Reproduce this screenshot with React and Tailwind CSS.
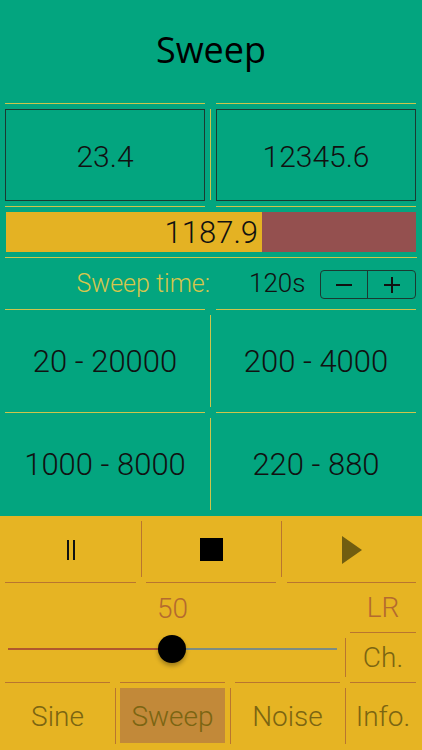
import React from "react";

const G = "bg-[#03a57f]";

function GreenCell({ children, h }) {
  return (
    <div className="w-[200px] flex flex-col">
      <div className="h-px bg-[#cdc54c]" />
      <div className={`${h} flex items-center justify-center text-[31px] text-[#111] pt-[2px]`}>{children}</div>
    </div>
  );
}

function VLine({ w, pt, h, color }) {
  return (
    <div className={`${w} flex justify-center ${pt}`}>
      <div className={`w-px ${h} ${color}`} />
    </div>
  );
}

export default function App() {
  return (
    <div
      className="w-[422px] h-[750px] flex flex-col overflow-hidden font-light"
      style={{ fontFamily: 'Roboto, "Liberation Sans", Arial, sans-serif' }}
    >
      {/* Green top */}
      <div className={`${G} flex flex-col h-[516px]`}>
        <div
          className="h-[103px] flex items-center justify-center text-[36px] text-black pb-[4px] font-normal"
          style={{ fontFamily: '"Open Sans", "Noto Sans", sans-serif' }}
        >
          Sweep
        </div>

        {/* Min / Max boxes */}
        <div className="flex pl-[5px]">
          <div className="w-[200px] flex flex-col">
            <div className="h-px bg-[#cdc54c]" />
            <div className="mt-[5px] h-[92px] border border-[#1b3a31] flex items-center justify-center text-[30px] text-[#111] pt-[3px]">
              23.4
            </div>
            <div className="mt-[5px] h-px bg-[#cdc54c]" />
          </div>
          <VLine w="w-[11px]" pt="pt-[6px]" h="h-[91px]" color="bg-[#cdc54c]" />
          <div className="w-[200px] flex flex-col">
            <div className="h-px bg-[#cdc54c]" />
            <div className="mt-[5px] h-[92px] border border-[#1b3a31] flex items-center justify-center text-[30px] text-[#111] pt-[3px]">
              12345.6
            </div>
            <div className="mt-[5px] h-px bg-[#cdc54c]" />
          </div>
        </div>

        {/* Progress bar */}
        <div className="mt-[5px] mx-[6px] h-[40px] flex bg-[#94504f]">
          <div className="w-[256px] h-full bg-[#e4b223] flex items-center justify-end pr-[4px] text-[31px] text-[#111] pt-[2px]">
            1187.9
          </div>
        </div>
        <div className="mt-[5px] mx-[5px] h-px bg-[#cdc54c]" />

        {/* Sweep time */}
        <div className="h-[51px] flex items-center">
          <div className="w-[210px] text-right text-[25px] text-[#d7c64c]">Sweep time:</div>
          <div className="ml-[39px] w-[61px] text-[26px] text-[#111]">120s</div>
          <div className="ml-[10px] w-[96px] h-[29px] border-[1.5px] border-[#1b3a31] rounded-[4px] flex mt-[2px]">
            <div className="w-[47px] flex items-center justify-center border-r-[1.5px] border-[#1b3a31]">
              <div className="w-[16px] h-[2px] bg-[#111]" />
            </div>
            <div className="flex-1 flex items-center justify-center relative">
              <div className="w-[16px] h-[2px] bg-[#111]" />
              <div className="absolute w-[2px] h-[16px] bg-[#111]" />
            </div>
          </div>
        </div>

        {/* Presets */}
        <div className="flex pl-[5px]">
          <GreenCell h="h-[102px]">20 - 20000</GreenCell>
          <VLine w="w-[11px]" pt="pt-[6px]" h="h-[92px]" color="bg-[#cdc54c]" />
          <GreenCell h="h-[102px]">200 - 4000</GreenCell>
        </div>
        <div className="flex pl-[5px]">
          <GreenCell h="h-[103px]">1000 - 8000</GreenCell>
          <VLine w="w-[11px]" pt="pt-[6px]" h="h-[92px]" color="bg-[#cdc54c]" />
          <GreenCell h="h-[103px]">220 - 880</GreenCell>
        </div>
      </div>

      {/* Yellow bottom */}
      <div className="bg-[#e6b423] flex-1 flex flex-col">
        {/* Transport */}
        <div className="flex pl-[5px]">
          <div className="w-[131px] flex flex-col">
            <div className="h-[66px] flex items-center justify-center">
              <div className="flex gap-[4px] mt-[2px]">
                <div className="w-[2px] h-[20px] bg-[#111]" />
                <div className="w-[2px] h-[20px] bg-[#111]" />
              </div>
            </div>
            <div className="h-px bg-[#b9752f]" />
          </div>
          <VLine w="w-[10px]" pt="pt-[5px]" h="h-[56px]" color="bg-[#b9752f]" />
          <div className="w-[130px] flex flex-col">
            <div className="h-[66px] flex items-center justify-center">
              <div className="w-[23px] h-[23px] bg-black mt-[1px]" />
            </div>
            <div className="h-px bg-[#b9752f]" />
          </div>
          <VLine w="w-[11px]" pt="pt-[5px]" h="h-[56px]" color="bg-[#b9752f]" />
          <div className="w-[129px] flex flex-col">
            <div className="h-[66px] flex items-center justify-center">
              <svg width="20" height="28" viewBox="0 0 20 28" className="mt-[2px]">
                <polygon points="0,0 20,14 0,28" fill="#715d10" />
              </svg>
            </div>
            <div className="h-px bg-[#b9752f]" />
          </div>
        </div>

        {/* Slider + LR/Ch */}
        <div className="flex h-[99px]">
          <div className="w-[345px] flex flex-col">
            <div className="h-[50px] flex items-center justify-center text-[28px] text-[#b46a2f] pt-[1px]">
              50
            </div>
            <div className="relative mx-[8px] h-[32px] flex items-center">
              <div className="w-[164px] h-[2px] bg-[#b0582e]" />
              <div className="flex-1 h-[2px] bg-[#7d8c82]" />
              <div className="absolute left-[150px] top-[2px] w-[28px] h-[28px] rounded-full bg-black shadow-[0_3px_4px_rgba(0,0,0,0.3)]" />
            </div>
          </div>
          <div className="w-[5px] flex flex-col">
            <div className="h-[55px]" />
            <div className="w-px h-[39px] bg-[#b9752f]" />
          </div>
          <div className="w-[66px] flex flex-col">
            <div className="h-[49px] flex items-center justify-center text-[28px] text-[#b46a2f] pt-[1px]">LR</div>
            <div className="h-px bg-[#b9752f]" />
            <div className="h-[49px] flex items-center justify-center text-[28px] text-[#7b6512] pt-[1px]">Ch.</div>
          </div>
        </div>

        {/* Tabs */}
        <div className="flex pl-[5px] text-[28px] text-[#7b6512]">
          <div className="w-[105px] flex flex-col">
            <div className="h-px bg-[#b9752f]" />
            <div className="mt-[5px] h-[55px] flex items-center justify-center pt-[2px]">Sine</div>
          </div>
          <VLine w="w-[10px]" pt="pt-[6px]" h="h-[56px]" color="bg-[#b9752f]" />
          <div className="w-[105px] flex flex-col">
            <div className="h-px bg-[#b9752f]" />
            <div className="mt-[5px] h-[55px] flex items-center justify-center bg-[#c28939] pt-[2px]">Sweep</div>
          </div>
          <VLine w="w-[10px]" pt="pt-[6px]" h="h-[56px]" color="bg-[#b9752f]" />
          <div className="w-[105px] flex flex-col">
            <div className="h-px bg-[#b9752f]" />
            <div className="mt-[5px] h-[55px] flex items-center justify-center pt-[2px]">Noise</div>
          </div>
          <VLine w="w-[10px]" pt="pt-[6px]" h="h-[56px]" color="bg-[#b9752f]" />
          <div className="w-[66px] flex flex-col">
            <div className="h-px bg-[#b9752f]" />
            <div className="mt-[5px] h-[55px] flex items-center justify-center pt-[2px]">Info.</div>
          </div>
        </div>
      </div>
    </div>
  );
}
